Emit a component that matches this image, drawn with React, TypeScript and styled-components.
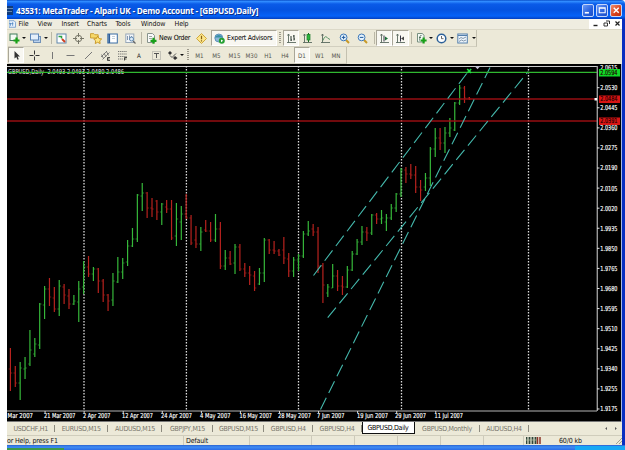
import { FC, ReactNode } from 'react';
import styled, { createGlobalStyle, css } from 'styled-components';

const GlobalStyle = createGlobalStyle`
  * {
    box-sizing: border-box;
  }
  body {
    margin: 0;
    overflow: hidden;
    background: #fff;
    font-family: 'DejaVu Sans Condensed', 'DejaVu Sans', sans-serif;
    font-size: 7px;
    color: #111;
  }
  svg {
    display: block;
    flex: none;
  }
`;

const Screen = styled.div`
  width: 625px;
  height: 450px;
  padding-left: 7px;
  display: flex;
  flex-direction: column;
`;

const TitleBar = styled.header`
  height: 19px;
  flex: none;
  display: flex;
  align-items: center;
  padding: 2px 3px 0 0;
  border-radius: 0 4px 0 0;
  background: linear-gradient(
    #0a50c8 0,
    #2f8bff 1.5px,
    #0a5be8 4px,
    #0453e0 10px,
    #0562f8 16px,
    #0340c0 19px
  );
  color: #fff;
`;

const Title = styled.h1`
  margin: 0 auto 0 3px;
  font: bold 8.2px 'Open Sans', sans-serif;
  letter-spacing: -0.23px;
  text-shadow: 1px 1px 0 #0a2f8c;
  white-space: nowrap;
`;

const WindowButton = styled.span<{ $close?: boolean }>`
  width: 12.5px;
  height: 13px;
  margin-left: 1.5px;
  border: 1px solid #c4d6fb;
  border-radius: 2px;
  background: ${({ $close }) =>
    $close
      ? 'linear-gradient(135deg, #f09070, #d8401a 60%, #b83010)'
      : 'linear-gradient(135deg, #6c9cf8, #2860dc 60%, #1c50c8)'};
`;

const Frame = styled.div`
  flex: 1;
  min-height: 0;
  display: flex;
  flex-direction: column;
  border-right: 3px solid #0a2ec0;
  background: #ece9d8;
`;

const MenuBar = styled.nav`
  height: 11px;
  flex: none;
  display: flex;
  align-items: center;
  background: #efede0;
  border-bottom: 1px solid #dcd9c8;
`;

const MenuItem = styled.span<{ $w: number }>`
  width: ${({ $w }) => $w}px;
  letter-spacing: -0.1px;
`;

const MdiButtons = styled.div`
  margin-left: auto;
  height: 10px;
  width: 33px;
  background: #fff;
`;

const ToolRow = styled.div<{ $h: number }>`
  height: ${({ $h }) => $h}px;
  flex: none;
  display: flex;
  align-items: stretch;
  padding-left: 1px;
`;

const ToolStrip = styled.div`
  display: flex;
  align-items: stretch;
  border-right: 1px solid #c4c1b0;
  border-bottom: 1px solid #d2cfbf;
`;

const Tool = styled.span<{ $w: number; $on?: boolean; $muted?: boolean }>`
  width: ${({ $w }) => $w}px;
  display: flex;
  align-items: center;
  justify-content: center;
  white-space: nowrap;
  font-size: 6.2px;
  color: ${({ $muted }) => ($muted ? '#55544e' : '#111')};
  ${({ $on }) =>
    $on &&
    css`
      background: #f8f7f1;
      border: 1px solid #fff;
      border-top-color: #a9a698;
      border-left-color: #a9a698;
    `}
`;

const ToolText = styled.span<{ $w: number }>`
  width: ${({ $w }) => $w}px;
  padding-left: 2px;
  align-self: center;
  font-size: 7px;
  letter-spacing: -0.27px;
  color: #000;
  white-space: nowrap;
`;

const ExpertButton = styled.span`
  width: 66px;
  margin-left: 1px;
  display: flex;
  align-items: center;
  padding-left: 2px;
  background: #f8f7f1;
  border: 1px solid #fff;
  border-top-color: #a9a698;
  border-left-color: #a9a698;
`;

const Separator = styled.span<{ $w: number }>`
  width: ${({ $w }) => $w}px;
  display: flex;
  justify-content: center;
  padding: 2px 0;
  &::after {
    content: '';
    width: 1px;
    background: #bab7a6;
  }
`;

const Grip = styled.span<{ $w: number }>`
  width: ${({ $w }) => $w}px;
  margin: 2px 0;
  background: repeating-linear-gradient(#9d9a8c 0 1px, transparent 1px 2px)
    center / 2px 100% no-repeat;
`;

const Caret = styled.span<{ $w: number }>`
  width: ${({ $w }) => $w}px;
  display: flex;
  align-items: center;
  justify-content: center;
  &::after {
    content: '';
    border: 2px solid transparent;
    border-top: 2px solid #111;
    border-bottom: 0;
  }
`;

const ChartPane = styled.main`
  height: 358px;
  flex: none;
  background: #000;
  border-right: 1px solid #a9b6e0;
`;

const Tabs = styled.div`
  height: 14px;
  flex: none;
  display: flex;
  border-bottom: 1px solid #d0cdbc;
`;

const Tab = styled.span<{ $w: number; $active?: boolean }>`
  width: ${({ $w }) => $w}px;
  flex: none;
  display: flex;
  align-items: center;
  justify-content: center;
  font-size: 7px;
  letter-spacing: -0.27px;
  color: #77756a;
  white-space: nowrap;
  background: linear-gradient(#8c8a7e, #8c8a7e) right center / 1px 7px no-repeat;
  ${({ $active }) =>
    $active &&
    css`
      color: #000;
      background: #fff;
      height: 12px;
      border: 1px solid #111;
      border-top: 0;
    `}
`;

const TabArrows = styled.span`
  margin: auto 4px auto auto;
`;

const StatusBar = styled.footer`
  height: 9px;
  flex: none;
  display: flex;
  align-items: center;
  overflow: hidden;
`;

const StatusCell = styled.span<{ $w: number }>`
  width: ${({ $w }) => $w}px;
  height: 9px;
  flex: none;
  display: flex;
  align-items: center;
  padding-left: 2px;
  letter-spacing: -0.15px;
  white-space: nowrap;
  border-right: 1px solid #cdcaba;
  &:first-child {
    padding-left: 0;
  }
  &:last-child {
    border-right: 0;
  }
`;

const Traffic = styled.span`
  margin-left: 18px;
`;

const Taskbar = styled.div`
  height: 5px;
  flex: none;
  display: flex;
  background: linear-gradient(#2a62d0, #3f8cf3 2px, #2c6ce6);
`;

const StartButton = styled.span`
  width: 57px;
  margin-top: 3px;
  background: #3c9a4a;
`;

const Tray = styled.span`
  width: 50px;
  margin-left: auto;
  margin-top: 1px;
  background: #18a8f4;
`;

const Icon: FC<{ size?: number; children: ReactNode }> = ({
  size = 11,
  children,
}) => (
  <svg width={size} height={size} viewBox="0 0 11 11" fill="none">
    {children}
  </svg>
);

const Plus = ({ x, y }: { x: number; y: number }) => (
  <path
    d={`M${x} ${y - 3}v6M${x - 3} ${y}h6`}
    stroke="#18a018"
    strokeWidth="2.2"
  />
);

const Magnifier = ({ plus }: { plus?: boolean }) => (
  <Icon>
    <path d="M6.8 6.8 10 10" stroke="#c89a28" strokeWidth="2" />
    <circle cx="4.6" cy="4.4" r="3.4" fill="#e4f2fc" stroke="#3e78b8" />
    <path
      d={plus ? 'M2.8 4.4h3.6M4.6 2.6v3.6' : 'M2.8 4.4h3.6'}
      stroke="#205a9c"
    />
  </Icon>
);

const Axes = ({ children }: { children: ReactNode }) => (
  <Icon>
    <path d="M2.5 1v8.5H10M1 9.5h2M1.5 2.5l1-1.5 1 1.5" stroke="#5a6a60" strokeWidth=".9" />
    {children}
  </Icon>
);

const TIMEFRAMES: [string, number][] = [
  ['M1', 15],
  ['M5', 19],
  ['M15', 17],
  ['M30', 17],
  ['H1', 16],
  ['H4', 18],
  ['D1', 16],
  ['W1', 19],
  ['MN', 14],
];

const MENU: [string, number][] = [
  ['File', 19],
  ['View', 24],
  ['Insert', 25.5],
  ['Charts', 28.5],
  ['Tools', 25.5],
  ['Window', 33.5],
  ['Help', 20],
];

const TABS: [string, number][] = [
  ['USDCHF,H1', 47.5],
  ['EURUSD,M15', 53.5],
  ['AUDUSD,M15', 54],
  ['GBPJPY,M15', 51],
  ['GBPUSD,M15', 51],
  ['GBPUSD,H4', 48.5],
  ['GBPUSD,H4', 49],
  ['GBPUSD,Daily', 53],
  ['GBPUSD,Monthly', 65],
  ['AUDUSD,H4', 49],
];

// high, low, open, close as chart y values
type Bar = [number, number, number, number];

const BARS: Bar[] = [
  [348, 391, 369, 373], [366, 387, 373, 383], [362, 400, 383, 368],
  [357, 379, 369, 368], [330, 366, 364, 350], [338, 357, 354, 344],
  [303, 349, 345, 304], [286, 319, 305, 289], [278, 306, 289, 297],
  [287, 312, 298, 309], [280, 316, 309, 286], [284, 304, 287, 295],
  [289, 309, 296, 304], [295, 305, 304, 301], [281, 322, 302, 289],
  [261, 294, 287, 267], [256, 277, 267, 274], [267, 281, 274, 269],
  [268, 293, 269, 281], [279, 302, 281, 295], [294, 311, 295, 301],
  [273, 306, 300, 281], [257, 283, 282, 272], [258, 279, 272, 263],
  [240, 266, 262, 246], [228, 247, 246, 239], [194, 242, 239, 195],
  [183, 211, 196, 193], [192, 218, 193, 208], [198, 217, 208, 209],
  [200, 220, 201, 212], [203, 225, 212, 204], [200, 213, 207, 209],
  [200, 240, 209, 238], [203, 246, 236, 219], [206, 240, 222, 214],
  [194, 219, 214, 218], [215, 245, 218, 243], [226, 248, 240, 244],
  [227, 251, 244, 232], [220, 232, 230, 231], [222, 242, 231, 240],
  [214, 242, 240, 229], [222, 269, 229, 266], [250, 270, 266, 258],
  [251, 265, 258, 264], [244, 274, 263, 247], [244, 271, 247, 269],
  [263, 277, 269, 273], [266, 285, 273, 275], [271, 291, 276, 288],
  [268, 285, 284, 273], [238, 282, 273, 240], [239, 254, 240, 250],
  [241, 254, 250, 251], [249, 256, 251, 255], [237, 264, 250, 258],
  [253, 277, 259, 271], [257, 277, 271, 260], [254, 271, 260, 256],
  [231, 258, 256, 234], [221, 236, 234, 231], [224, 236, 229, 232],
  [227, 273, 232, 266], [263, 303, 266, 285], [284, 297, 293, 287],
  [264, 288, 288, 276], [270, 291, 276, 286], [276, 295, 286, 287],
  [266, 288, 287, 270], [251, 271, 270, 254], [239, 255, 254, 242],
  [226, 245, 242, 232], [227, 241, 232, 233], [214, 235, 233, 215],
  [213, 224, 215, 219], [210, 224, 219, 218], [214, 231, 222, 218],
  [204, 220, 218, 208], [193, 212, 208, 194], [168, 197, 194, 170],
  [167, 183, 170, 174], [164, 179, 174, 175], [166, 193, 175, 187],
  [180, 201, 187, 190], [173, 191, 187, 178], [147, 186, 178, 149],
  [128, 157, 149, 138], [128, 150, 138, 143], [127, 153, 143, 133],
  [118, 137, 133, 128], [102, 131, 130, 103], [85, 105, 103, 88],
  [86, 103, 88, 98], [97, 100, 98, 99],
];

const BAR_STEP = 4.883;

const PRICES = [
  '2.0530', '2.0445', '2.0360', '2.0275', '2.0190', '2.0105', '2.0020',
  '1.9935', '1.9850', '1.9765', '1.9680', '1.9595', '1.9510', '1.9425',
  '1.9340', '1.9255', '1.9175',
];

// label, left edge, width
const DATES: [string, number, number][] = [
  ['Mar 2007', 7.5, 25.5],
  ['21 Mar 2007', 44, 31.5],
  ['2 Apr 2007', 83, 27.5],
  ['12 Apr 2007', 122, 31],
  ['24 Apr 2007', 161, 31],
  ['4 May 2007', 200, 30.5],
  ['16 May 2007', 239.5, 32.5],
  ['28 May 2007', 278, 33],
  ['7 Jun 2007', 317, 27.5],
  ['19 Jun 2007', 357, 31],
  ['29 Jun 2007', 395, 31],
  ['11 Jul 2007', 434.5, 28.5],
];

const PriceText = styled.text`
  font-size: 6.8px;
`;

const Price = ({ y, value, fill = '#fff' }: { y: number; value: string; fill?: string }) => (
  <PriceText
    x="600.3"
    y={y + 2.4}
    fill={fill}
    stroke={fill}
    strokeWidth=".15"
    textLength="17.2"
    lengthAdjust="spacingAndGlyphs"
  >
    {value}
  </PriceText>
);

const PriceTag = ({ y, value, color }: { y: number; value: string; color: string }) => (
  <>
    <rect x="599" y={y - 3.5} width="21" height="7.5" fill={color} />
    <Price y={y} value={value} fill="#200" />
  </>
);

const Chart = () => (
  <svg width="614" height="358" viewBox="7 64 614 358">
    <path d="M7 66.5H597" stroke="#ccc" />
    {[84, 186.4, 298.5, 401.5, 528.5].map((x) => (
      <path key={x} d={`M${x} 66V411`} stroke="#dcdcdc" strokeWidth="1.3" strokeDasharray="1.6 1.4" />
    ))}
    {BARS.map(([high, low, open, close], i) => {
      const x = 10.4 + i * BAR_STEP;
      return (
        <g key={i} stroke={close < open ? '#36b83a' : '#b8221e'}>
          <path d={`M${x} ${high}V${low}`} strokeWidth="1.2" />
          <path d={`M${x - 1.8} ${open}H${x}M${x} ${close}h1.8`} opacity=".6" />
        </g>
      );
    })}
    <path d="M7 99H597M7 121H597" stroke="#960e12" strokeWidth="1.5" />
    <g stroke="#44b8ac" strokeWidth="1.1" strokeDasharray="13 5.5">
      <path d="M313.5 275.5 469 70.5" />
      <path d="M327.7 317.7 528.3 71.5" />
      <path d="M320.5 409.5 490 67.5" />
    </g>
    <PriceText x="8" y="73.7" fill="#eee" textLength="116" lengthAdjust="spacingAndGlyphs" xmlSpace="preserve">
      GBPUSD,Daily  2.0493 2.0493 2.0480 2.0486
    </PriceText>
    <path d="M7 72.4H597" stroke="#30b830" strokeWidth="1.2" />
    <path d="m467.2 69 4 4m0-4-4 4" stroke="#22e044" strokeWidth="1.6" />
    <path d="M474.5 66h6l-3 3.2z" fill="#c4c4d4" />
    <path d="M597.3 66V411" stroke="#999" strokeWidth="1.4" />
    <path d="M7 411H597" stroke="#b4b4b4" strokeWidth="1.2" />
    <path d="M7 421.5H621" stroke="#777" />
    <rect x="594.5" y="98" width="2.5" height="2.5" fill="#fff" />
    <Price y={67.5} value="2.0615" />
    {PRICES.map((value, i) => {
      const y = 87.7 + i * 20.08;
      return (
        <g key={value}>
          <path d={`M597 ${y}h2.5`} stroke="#ddd" />
          <Price y={y} value={value} />
        </g>
      );
    })}
    <PriceTag y={72.5} value="2.0594" color="#10d828" />
    <PriceTag y={99} value="2.0484" color="#d81414" />
    <PriceTag y={121} value="2.0391" color="#d81414" />
    {DATES.map(([label, x, width], i) => (
      <g key={label}>
        {i > 0 && <path d={`M${6 + i * 39.07} 411v2`} stroke="#ddd" />}
        <PriceText
          x={x}
          y="418.2"
          fill="#fff"
          stroke="#fff"
          strokeWidth=".15"
          textLength={width}
          lengthAdjust="spacingAndGlyphs"
        >
          {label}
        </PriceText>
      </g>
    ))}
  </svg>
);

const StandardToolbar = () => (
  <ToolRow $h={17}>
    <ToolStrip>
      <Tool $w={13}>
        <Icon>
          <rect x="1" y="1" width="7" height="6.5" fill="#f4faf4" stroke="#3f7d5a" />
          <Plus x={7.5} y={7.5} />
        </Icon>
      </Tool>
      <Caret $w={6} />
      <Tool $w={17}>
        <Icon>
          <rect x="3.5" y="3.5" width="7" height="6" fill="#bcd2ec" stroke="#7292b8" />
          <rect x=".5" y="1" width="8" height="6" fill="#e4effa" stroke="#5c86b8" />
        </Icon>
      </Tool>
      <Caret $w={4} />
      <Separator $w={6} />
      <Tool $w={15}>
        <Icon>
          <rect x="1" y="1" width="9" height="9" fill="#fff" stroke="#6088ac" />
          <path d="M2.5 3.5h3v2" stroke="#28a040" strokeWidth="1.5" />
          <path d="m6 6 3 3" stroke="#d04020" strokeWidth="2" />
        </Icon>
      </Tool>
      <Tool $w={19}>
        <Icon>
          <circle cx="5.5" cy="5.5" r="3.2" stroke="#777668" />
          <path d="M5.5 0v4M5.5 7v4M0 5.5h4M7 5.5h4" stroke="#777668" />
        </Icon>
      </Tool>
      <Tool $w={15}>
        <Icon size={12}>
          <path d="M.5 1.5h3l1 1h3v3h-7z" fill="#f6d868" stroke="#c89a28" strokeWidth=".8" />
          <path
            d="m7 3.8 1.2 2.2 2.5.4-1.8 1.7.4 2.5L7 9.4l-2.2 1.2.4-2.5-1.8-1.7 2.5-.4z"
            fill="#ffe680"
            stroke="#c49018"
            strokeWidth=".8"
          />
        </Icon>
      </Tool>
      <Tool $w={19}>
        <Icon>
          <rect x=".8" y="1" width="9.5" height="9" fill="#fff" stroke="#386ca4" />
          <path d="M2.2 1v9" stroke="#2d5c98" strokeWidth="1.8" />
          <path d="M5 3.5h3M5 5.5h3" stroke="#a8bccc" strokeWidth=".7" />
        </Icon>
      </Tool>
      <Tool $w={16}>
        <Icon>
          <rect x=".8" y="1" width="8" height="8.5" fill="#f4f7fa" stroke="#98a8b8" />
          <path d="M2.5 7V3m2 4V2.5m2 4V3" stroke="#8296b0" />
          <circle cx="6.5" cy="6" r="2" fill="#dcecf8" stroke="#6088b0" />
          <path d="m8 8 2.5 2.5" stroke="#666" strokeWidth="1.3" />
        </Icon>
      </Tool>
      <Separator $w={7} />
      <Tool $w={12}>
        <Icon>
          <path d="M1.5.5h5l2 2v7h-7z" fill="#fafafa" stroke="#88948c" />
          <path d="M3 3.5h3M3 5.5h3" stroke="#88948c" strokeWidth=".8" />
          <Plus x={7.5} y={7.8} />
        </Icon>
      </Tool>
      <ToolText $w={36}>New Order</ToolText>
      <Tool $w={17}>
        <Icon>
          <path d="M5.5.5 10.5 5.5l-5 5-5-5z" fill="#fce68c" stroke="#d0a83c" />
          <path d="M5.5 2.8v3.4M5.5 7.2v1.3" stroke="#886010" strokeWidth="1.2" />
        </Icon>
      </Tool>
      <ExpertButton>
        <Icon>
          <circle cx="4.8" cy="5" r="4" fill="#8cb8d8" stroke="#4c84b0" strokeWidth=".8" />
          <path d="M1 4.5C2 1 7.5 1 8.5 4.5z" fill="#3890a8" />
          <circle cx="7.8" cy="7.8" r="3" fill="#25a034" />
          <path d="m7 6.5 2.2 1.3L7 9.2z" fill="#fff" />
        </Icon>
        <ToolText $w={50}>Expert Advisors</ToolText>
      </ExpertButton>
      <Grip $w={6} />
      <Tool $w={16} $on>
        <Axes>
          <path d="M5 3v5M8 2v5.5M5 7h1M7 3h1M8 6h1" stroke="#26342c" />
        </Axes>
      </Tool>
      <Tool $w={17}>
        <Axes>
          <path d="M6.5 0v9" stroke="#186820" />
          <rect x="5" y="1.5" width="3" height="5.5" fill="#2cb83c" stroke="#187a28" strokeWidth=".7" />
        </Axes>
      </Tool>
      <Tool $w={19}>
        <Axes>
          <path d="M3 7.5C4.5 3 6 3 7.5 5L10 6.5" stroke="#4c8c5c" strokeWidth=".9" />
        </Axes>
      </Tool>
      <Tool $w={18}>
        <Magnifier plus />
      </Tool>
      <Tool $w={19}>
        <Magnifier />
      </Tool>
      <Separator $w={4} />
      <Tool $w={16} $on>
        <Axes>
          <path d="M5 2.5v6" stroke="#334" />
          <path d="m6 3.5 3 2-3 2z" fill="#1c7038" />
        </Axes>
      </Tool>
      <Tool $w={17} $on>
        <Axes>
          <path d="M5.5 2.5v6" stroke="#334" />
          <path d="m9 3.5-3 2 3 2z" fill="#444" />
        </Axes>
      </Tool>
      <Separator $w={5} />
      <Tool $w={14}>
        <Icon>
          <path d="M1.5.5h5l1.5 2v6.5h-6.500z" fill="#f4faf4" stroke="#789080" />
          <path d="M5.5 2.5c-2-.5-1.5 2-2 5M3 4.5h2" stroke="#3c5c48" strokeWidth=".8" />
          <Plus x={7.6} y={7.5} />
        </Icon>
      </Tool>
      <Caret $w={6} />
      <Tool $w={15}>
        <Icon>
          <circle cx="5.5" cy="5.5" r="4.3" fill="#fff" stroke="#2c6098" strokeWidth="1.5" />
          <path d="M5.5 3v2.7H7.5" stroke="#444" strokeWidth=".8" />
        </Icon>
      </Tool>
      <Caret $w={5} />
      <Tool $w={17}>
        <Icon>
          <rect x=".8" y="1" width="9.5" height="9" fill="#eef5fc" stroke="#5480ac" />
          <path d="M1 2.5h9" stroke="#5480ac" />
          <path d="m2 6 2-1.5 2 1 3-1.5M2 8.5 4.5 7l2 1L9 7" stroke="#6a8298" strokeWidth=".8" />
        </Icon>
      </Tool>
      <Caret $w={5} />
    </ToolStrip>
  </ToolRow>
);

const DrawingToolbar = () => (
  <ToolRow $h={17}>
    <ToolStrip>
      <Tool $w={16} $on>
        <Icon>
          <path d="M3.5 1v7.5l1.8-1.6 1.2 2.9 1.3-.6-1.2-2.7h2.4z" fill="#333" />
        </Icon>
      </Tool>
      <Tool $w={20}>
        <Icon>
          <path d="M5.5.5v4M5.5 6.5v4M.5 5.5h4M6.5 5.5h4" stroke="#333" />
        </Icon>
      </Tool>
      <Tool $w={17}>
        <Icon>
          <path d="M5.5 2v7" stroke="#777" />
        </Icon>
      </Tool>
      <Tool $w={19}>
        <Icon>
          <path d="M1.5 5.5h8" stroke="#777" />
        </Icon>
      </Tool>
      <Tool $w={16}>
        <Icon>
          <path d="m2 9 7-7" stroke="#777" />
        </Icon>
      </Tool>
      <Tool $w={18}>
        <Icon>
          <path
            d="m1 7 6-6M2.5 9.5l7-7M1.5 4.5l2 4M4 3l2 4M6.5 1.5l2 4"
            stroke="#666"
            strokeWidth=".8"
          />
          <path d="M10 7.5H7.5v3H10M7.5 9h2" stroke="#222" strokeWidth=".8" />
        </Icon>
      </Tool>
      <Tool $w={16}>
        <Icon>
          <path
            d="M1 1.5h9M1 4h9M1 6.5h9M1 9h5"
            stroke="#666"
            strokeDasharray="1.3 .8"
            strokeWidth=".9"
          />
          <path d="M10 7.5H7.5v3M7.5 9h2" stroke="#222" strokeWidth=".8" />
        </Icon>
      </Tool>
      <Tool $w={18}>A</Tool>
      <Tool $w={16}>
        <Icon>
          <rect x="1.5" y="1.5" width="8" height="8" stroke="#888" strokeDasharray="1 1" strokeWidth=".8" />
          <path d="M3 3.5h5M5.5 3.5V8" stroke="#555" />
        </Icon>
      </Tool>
      <Tool $w={16}>
        <Icon>
          <path d="m1 3 2-2 2 2-2 2zM6 8l2-2 2.5 2L8 10z" fill="#333" />
          <path d="m3 5.5 2 2L9 3.5" stroke="#444" strokeWidth=".9" />
        </Icon>
      </Tool>
      <Caret $w={4} />
      <Grip $w={8} />
      {TIMEFRAMES.map(([label, width]) => (
        <Tool key={label} $w={width} $on={label === 'D1'} $muted>
          {label}
        </Tool>
      ))}
      <Tool $w={3} />
    </ToolStrip>
  </ToolRow>
);

export default function App() {
  return (
    <>
      <GlobalStyle />
      <Screen>
        <TitleBar>
          <svg width="6" height="9" viewBox="0 0 6 9">
            <path d="M0 0h6v9H0z" fill="#123a78" />
            <path d="M0 2.5h6M0 5.5h5" stroke="#7e9ec0" strokeWidth=".8" />
          </svg>
          <Title>43531: MetaTrader - Alpari UK - Demo Account - [GBPUSD,Daily]</Title>
          <WindowButton>
            <Icon size={10}>
              <path d="M2 8.5h4.5" stroke="#fff" strokeWidth="1.8" />
            </Icon>
          </WindowButton>
          <WindowButton>
            <Icon size={10}>
              <path d="M2.500 3h6.500v5.500H2.500zM2.500 3.500h6.500" stroke="#fff" strokeWidth="1.200" />
            </Icon>
          </WindowButton>
          <WindowButton $close>
            <Icon size={10}>
              <path d="m3 3 5.500 5.500m0-5.500L3 8.500" stroke="#fff" strokeWidth="1.600" />
            </Icon>
          </WindowButton>
        </TitleBar>
        <Frame>
          <MenuBar>
            <Tool $w={11.5}>
              <Icon size={8}>
                <path d="M0 1h7l2 2v7H0z" fill="#e8f2fc" stroke="#5a8cc8" />
                <path d="M0 5h6M2 8V4M5 8V3" stroke="#4880c0" />
              </Icon>
            </Tool>
            {MENU.map(([label, width]) => (
              <MenuItem key={label} $w={width}>
                {label}
              </MenuItem>
            ))}
            <MdiButtons>
              <svg width="33" height="10" viewBox="0 0 33 10" fill="none" stroke="#222">
                <path d="M4.5 6.5h4" strokeWidth="1.4" />
                <path d="M17 2h3.5v3M15 4h3.500v3H15z" strokeWidth=".9" />
                <path d="m26.500 2.500 4 4m0-4-4 4" strokeWidth="1.200" />
              </svg>
            </MdiButtons>
          </MenuBar>
          <StandardToolbar />
          <DrawingToolbar />
          <ChartPane>
            <Chart />
          </ChartPane>
          <Tabs>
            {TABS.map(([label, width], i) => (
              <Tab key={i} $w={width} $active={label === 'GBPUSD,Daily'}>
                {label}
              </Tab>
            ))}
            <TabArrows>
              <svg width="14" height="5" viewBox="0 0 14 5">
                <path d="M3 1v3L1.200 2.500zM11 1v3l1.800-1.500z" fill="#555" />
              </svg>
            </TabArrows>
          </Tabs>
          <StatusBar>
            <StatusCell $w={177}>or Help, press F1</StatusCell>
            <StatusCell $w={66}>Default</StatusCell>
            <StatusCell $w={62} />
            <StatusCell $w={43} />
            <StatusCell $w={43} />
            <StatusCell $w={43} />
            <StatusCell $w={43} />
            <StatusCell $w={40} />
            <StatusCell $w={98}>
              <svg width="15" height="7" viewBox="0 0 15 7">
                <path d="M.5 0v7M3.5 0v7M6.5 0v7M9.5 0v7" stroke="#31463a" strokeWidth="1.8" />
                <path d="M11.5 0v7M14 0v7" stroke="#8c3428" strokeWidth="1.5" />
                <path d="M0 3h10" stroke="#b8c8a8" strokeWidth=".7" />
              </svg>
              <Traffic>60/0 kb</Traffic>
              <svg width="7" height="7" viewBox="0 0 7 7" style={{ marginLeft: 'auto' }}>
                <path d="m1 7 6-6M4 7l3-3" stroke="#a4a190" />
              </svg>
            </StatusCell>
          </StatusBar>
        </Frame>
        <Taskbar>
          <StartButton />
          <Tray />
        </Taskbar>
      </Screen>
    </>
  );
}
